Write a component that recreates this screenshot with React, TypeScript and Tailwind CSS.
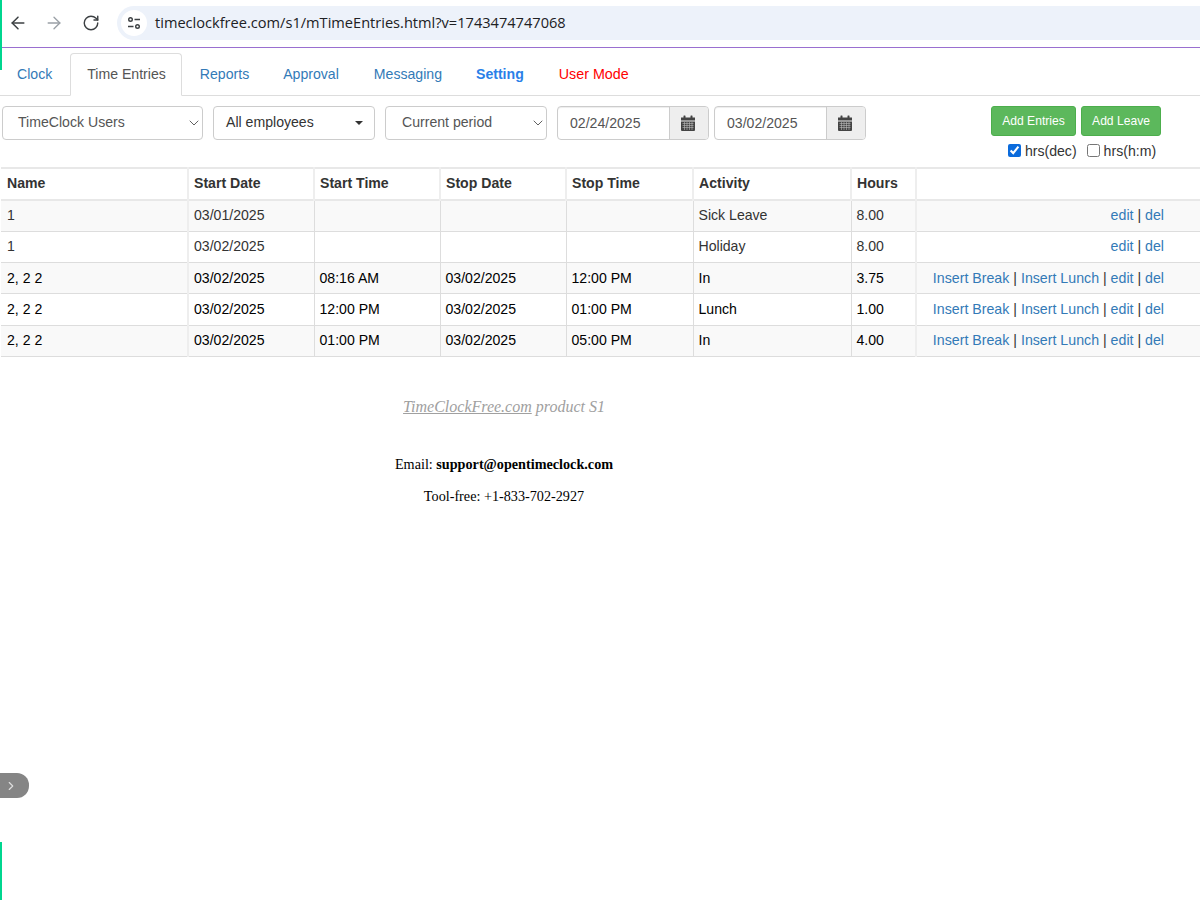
import { ArrowLeft, ArrowRight, ChevronDown, ChevronRight, RotateCw } from "lucide-react";

const rows = [
  { name: "1", startDate: "03/01/2025", startTime: "", stopDate: "", stopTime: "", activity: "Sick Leave", hours: "8.00", full: false },
  { name: "1", startDate: "03/02/2025", startTime: "", stopDate: "", stopTime: "", activity: "Holiday", hours: "8.00", full: false },
  { name: "2, 2 2", startDate: "03/02/2025", startTime: "08:16 AM", stopDate: "03/02/2025", stopTime: "12:00 PM", activity: "In", hours: "3.75", full: true },
  { name: "2, 2 2", startDate: "03/02/2025", startTime: "12:00 PM", stopDate: "03/02/2025", stopTime: "01:00 PM", activity: "Lunch", hours: "1.00", full: true },
  { name: "2, 2 2", startDate: "03/02/2025", startTime: "01:00 PM", stopDate: "03/02/2025", stopTime: "05:00 PM", activity: "In", hours: "4.00", full: true },
];

const CalendarIcon = () => (
  <svg width="14" height="16" viewBox="0 0 14 16" fill="#444">
    <rect x="2.5" y="0.5" width="2" height="3" rx="0.5" />
    <rect x="9.5" y="0.5" width="2" height="3" rx="0.5" />
    <path d="M0 2.5h14v3H0z" />
    <path d="M0 6.5h14V15a1 1 0 0 1-1 1H1a1 1 0 0 1-1-1z" />
    <path d="M1.5 8.5h11M1.5 10.5h11M1.5 12.5h11M3.5 7v8M6 7v8M8.5 7v8M11 7v8" stroke="#bbb" strokeWidth="0.6" />
  </svg>
);

const DateField = ({ value }: { value: string }) => (
  <div className="flex h-[34px] w-[152px] overflow-hidden rounded border border-[#ccc] shadow-[inset_0_1px_1px_rgba(0,0,0,0.075)]">
    <div className="flex-1 pl-3 leading-[32px] text-[#555]">{value}</div>
    <div className="flex w-[39px] items-center justify-center border-l border-[#ccc] bg-[#eee] pr-[2px]">
      <CalendarIcon />
    </div>
  </div>
);

const Sep = () => <span className="text-[#333]"> | </span>;

const A = ({ children }: { children: string }) => <a className="text-[#337ab7]">{children}</a>;

export default function App() {
  return (
    <div className="relative h-[900px] w-[1200px] overflow-hidden bg-white font-['Liberation_Sans',Arial,sans-serif] text-[14.1px] text-[#333]">
      {/* browser toolbar */}
      <div className="flex h-[48px] items-center border-b border-[#9a6fd0] pb-[2px]">
        <div className="flex w-[117px] items-center pl-[8px]">
          <ArrowLeft size={20} strokeWidth={1.8} className="text-[#3c4043]" />
          <ArrowRight size={20} strokeWidth={1.6} className="ml-[16px] text-[#9aa0a6]" />
          <RotateCw size={18} strokeWidth={1.9} className="ml-[18px] text-[#3c4043]" />
        </div>
        <div className="flex h-[34px] flex-1 items-center rounded-l-[17px] bg-[#edf2fa] pl-[4px]">
          <div className="flex h-[26px] w-[26px] items-center justify-center rounded-full bg-white">
            <svg width="14" height="14" viewBox="0 0 14 14" fill="none" stroke="#3c4043" strokeWidth="1.4">
              <circle cx="3.5" cy="3.5" r="1.8" />
              <path d="M7.5 3.5H13M1 10.5h5.5" />
              <circle cx="10.5" cy="10.5" r="1.8" />
            </svg>
          </div>
          <span className="ml-[8px] font-['Open_Sans',sans-serif] text-[14.6px] text-[#202124]">timeclockfree.com/s1/mTimeEntries.html?v=1743474747068</span>
        </div>
      </div>

      {/* tabs */}
      <div className="mt-[5px] flex h-[43px] items-stretch border-b border-[#ddd] pl-[2px]">
        <a className="px-[15px] pt-[11px] text-[#337ab7]">Clock</a>
        <a className="mb-[-1px] ml-[3px] rounded-t border border-[#ddd] border-b-white bg-white pl-[16px] pr-[15px] pt-[10px] text-[#555]">Time Entries</a>
        <a className="ml-[3px] px-[15px] pt-[11px] text-[#337ab7]">Reports</a>
        <a className="ml-[4px] px-[15px] pt-[11px] text-[#337ab7]">Approval</a>
        <a className="ml-[5px] px-[15px] pt-[11px] text-[#337ab7]">Messaging</a>
        <a className="ml-[4px] px-[15px] pt-[11px] font-bold text-[#2a7fe8]">Setting</a>
        <a className="ml-[5px] px-[15px] pt-[11px] text-[14.3px] text-[#f00]">User Mode</a>
      </div>

      {/* filters */}
      <div className="flex h-[71px] items-start pl-[2px] pt-[10px]">
        <div className="flex h-[34px] w-[201px] items-center justify-between rounded border border-[#ccc] pl-[15px] text-[#555]">
          TimeClock Users
          <ChevronDown size={16} strokeWidth={1.4} className="text-[#555]" />
        </div>
        <div className="ml-[10px] flex h-[34px] w-[162px] items-center justify-between rounded border border-[#ccc] pl-[12px] pr-[11px]">
          All employees
          <span className="h-0 w-0 border-x-[4px] border-t-[4px] border-x-transparent border-t-[#333]" />
        </div>
        <div className="ml-[10px] flex h-[34px] w-[162px] items-center justify-between rounded border border-[#ccc] pl-[16px] text-[#555]">
          Current period
          <ChevronDown size={16} strokeWidth={1.4} className="text-[#555]" />
        </div>
        <div className="ml-[10px]">
          <DateField value="02/24/2025" />
        </div>
        <div className="ml-[5px]">
          <DateField value="03/02/2025" />
        </div>
        <div className="ml-[125px] flex flex-col items-center">
          <div className="flex gap-[5px]">
            <button className="h-[30px] w-[85px] rounded-[3px] border border-[#4cae4c] bg-[#5cb85c] text-[12.1px] text-white">Add Entries</button>
            <button className="h-[30px] w-[80px] rounded-[3px] border border-[#4cae4c] bg-[#5cb85c] text-[12.1px] text-white">Add Leave</button>
          </div>
          <div className="ml-[12px] mt-[5px] flex items-center">
            <input type="checkbox" defaultChecked className="mb-[3px] h-[13px] w-[13px] accent-[#0b6bdc]" />
            <span className="ml-[4px]">hrs(dec)</span>
            <input type="checkbox" className="mb-[3px] ml-[10px] h-[13px] w-[13px]" />
            <span className="ml-[4px]">hrs(h:m)</span>
          </div>
        </div>
      </div>

      {/* entries table */}
      <table className="ml-[1px] w-[1199px] table-fixed border-collapse">
        <colgroup>
          <col className="w-[187px]" />
          <col className="w-[126px]" />
          <col className="w-[126px]" />
          <col className="w-[126px]" />
          <col className="w-[127px]" />
          <col className="w-[158px]" />
          <col className="w-[65px]" />
          <col />
        </colgroup>
        <thead>
          <tr className="h-[32px] border-y-2 border-[#e8e8e8]">
            {["Name", "Start Date", "Start Time", "Stop Date", "Stop Time", "Activity", "Hours", ""].map((h, i) => (
              <th key={i} className="border-x-2 border-[#eee] px-[5px] text-left font-bold first:border-l-0 first:pl-[6px] last:border-r-0">{h}</th>
            ))}
          </tr>
        </thead>
        <tbody>
          {rows.map((r, i) => (
            <tr key={i} className={`h-[31.3px] border-b border-[#ddd] ${i % 2 === 0 ? "bg-[#f9f9f9]" : "bg-white"} ${r.full ? "text-black" : "text-[#333]"}`}>
              <td className="border-r-2 border-[#eee] pl-[6px] pr-[5px]">{r.name}</td>
              <td className="border-r border-[#ddd] px-[5px]">{r.startDate}</td>
              <td className="border-r border-[#ddd] px-[5px]">{r.startTime}</td>
              <td className="border-r border-[#ddd] px-[5px]">{r.stopDate}</td>
              <td className="border-r border-[#ddd] px-[5px]">{r.stopTime}</td>
              <td className="border-r border-[#ddd] px-[5px]">{r.activity}</td>
              <td className="border-r-2 border-[#eee] px-[5px]">{r.hours}</td>
              <td className="whitespace-pre pr-[36px] text-right text-[14.2px]">
                {r.full && (
                  <>
                    <A>Insert Break</A>
                    <Sep />
                    <A>Insert Lunch</A>
                    <Sep />
                  </>
                )}
                <A>edit</A>
                <Sep />
                <A>del</A>
              </td>
            </tr>
          ))}
        </tbody>
      </table>

      {/* footer */}
      <div className="mt-[40px] flex w-[1008px] flex-col items-center font-['Liberation_Serif',serif] text-black">
        <p className="text-[16px] italic leading-[20px] text-[#a0a0a0]">
          <span className="underline">TimeClockFree.com</span> product S1
        </p>
        <p className="mt-[37px] text-[14.2px] leading-[20px]">
          Email: <b>support@opentimeclock.com</b>
        </p>
        <p className="mt-[12px] text-[14.2px] leading-[20px]">Tool-free: +1-833-702-2927</p>
      </div>

      {/* side handle and window edge */}
      <div className="absolute left-0 top-[773px] flex h-[25px] w-[29px] items-center rounded-r-[12px] bg-[#858585] pl-[4px]">
        <ChevronRight size={14} className="text-[#ddd]" />
      </div>
      <div className="absolute left-0 top-0 h-[70px] w-[2px] bg-[#00d68f]" />
      <div className="absolute bottom-0 left-0 h-[58px] w-[2px] bg-[#00d68f]" />
    </div>
  );
}
